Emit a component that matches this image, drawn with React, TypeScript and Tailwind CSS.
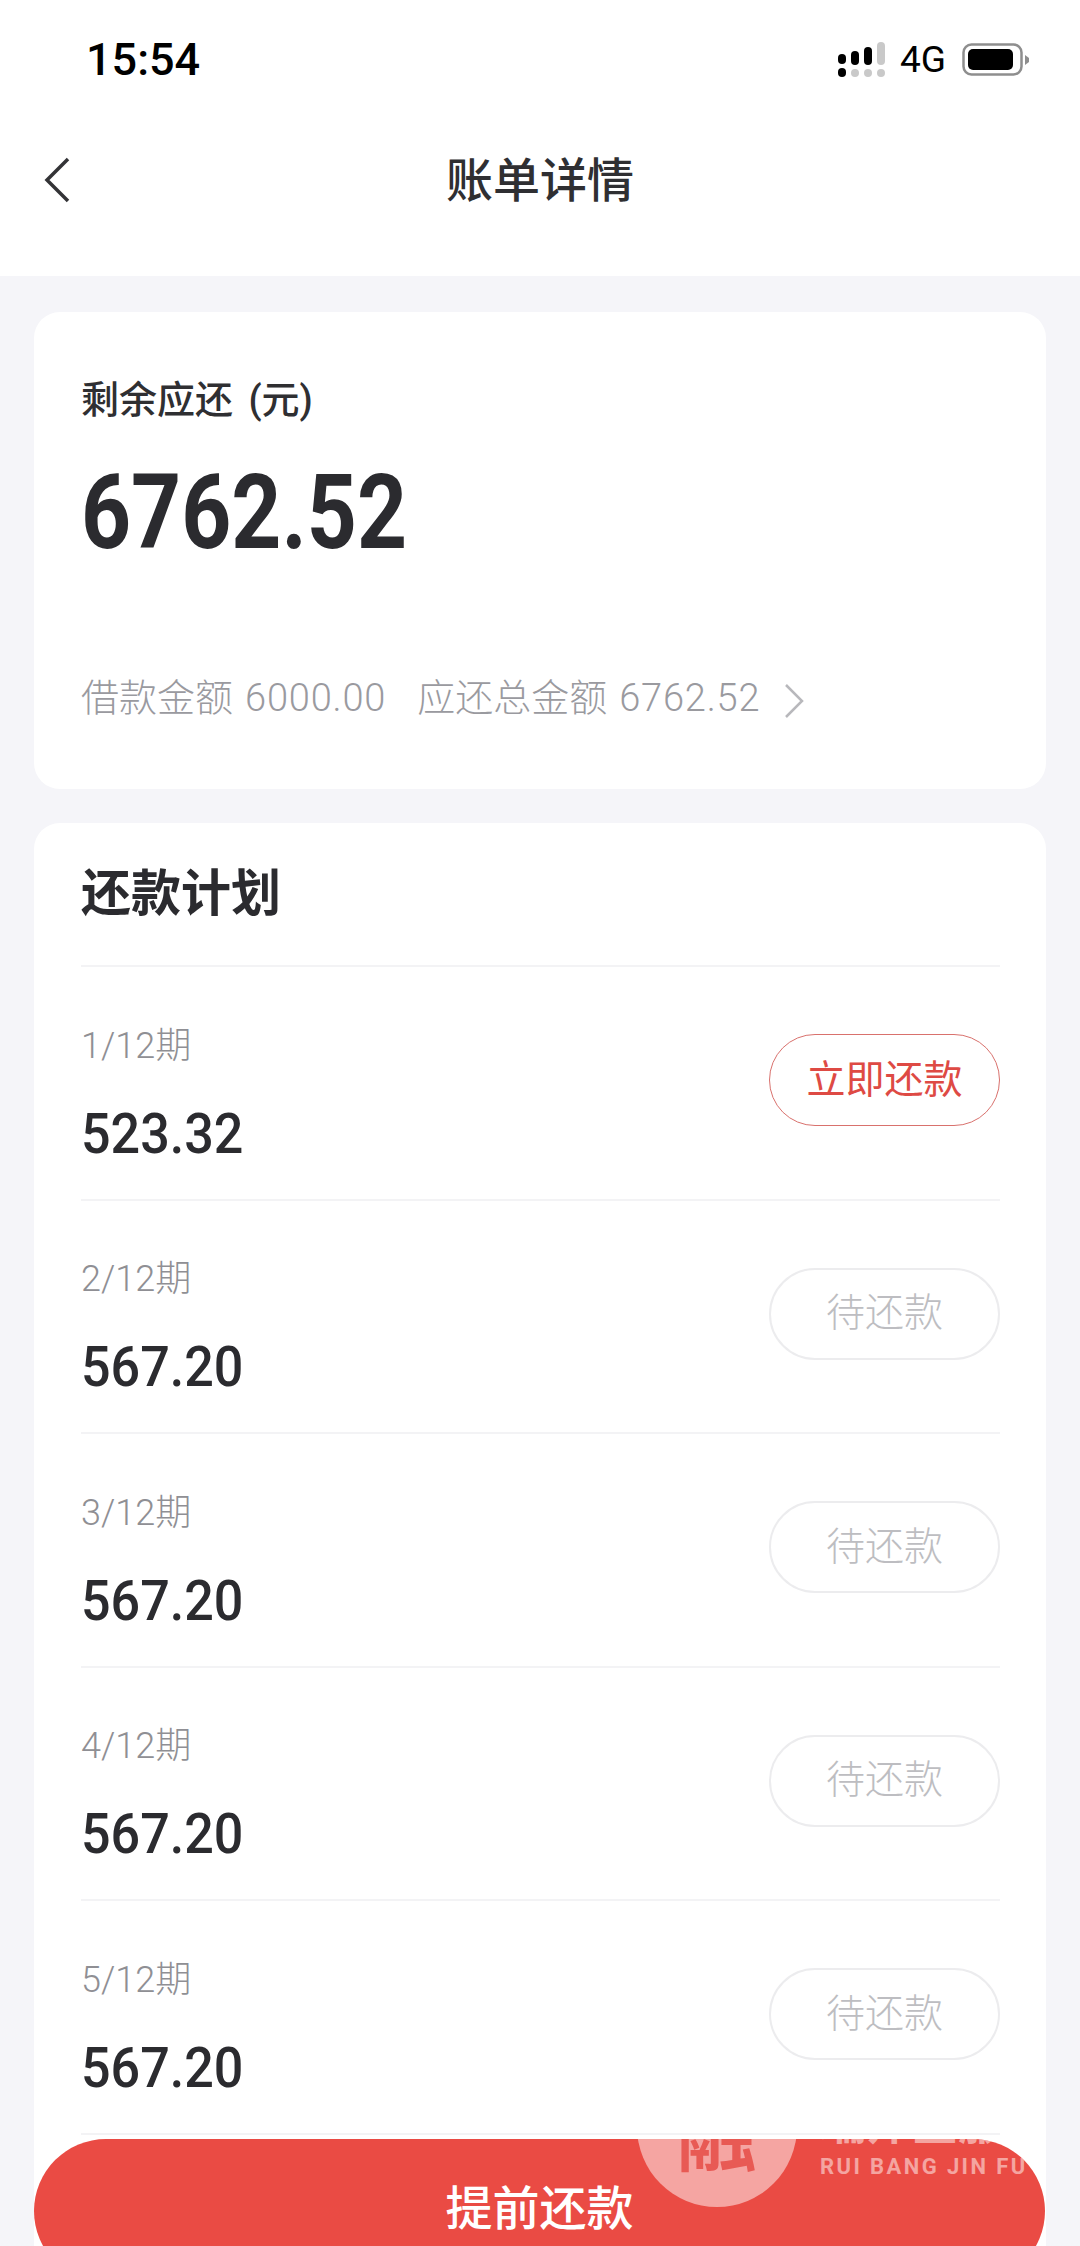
import React from 'react'

const sans = "font-['Roboto','Noto_Sans_CJK_SC',sans-serif]"

const plans = [
  { label: '1/12期', amount: '523.32', active: true },
  { label: '2/12期', amount: '567.20', active: false },
  { label: '3/12期', amount: '567.20', active: false },
  { label: '4/12期', amount: '567.20', active: false },
  { label: '5/12期', amount: '567.20', active: false },
]

const Signal = () => (
  <svg width="50" height="36" viewBox="0 0 50 36" className="block">
    <rect x="2" y="12" width="8" height="10" rx="4" fill="#000" />
    <rect x="15" y="9" width="8" height="14" rx="4" fill="#000" />
    <rect x="28" y="5" width="8" height="18" rx="4" fill="#000" />
    <rect x="41" y="0" width="8" height="23" rx="4" fill="#c9c9c9" />
    <rect x="2" y="26" width="8" height="9" rx="4" fill="#000" />
    <rect x="15" y="27" width="8" height="8" rx="4" fill="#c9c9c9" />
    <rect x="28" y="27" width="8" height="8" rx="4" fill="#c9c9c9" />
    <rect x="41" y="27" width="8" height="8" rx="4" fill="#c9c9c9" />
  </svg>
)

const Battery = () => (
  <svg width="68" height="34" viewBox="0 0 68 34" className="block">
    <rect x="1.5" y="1.5" width="58" height="30" rx="8" fill="none" stroke="#8e8e8e" strokeWidth="2.5" />
    <rect x="6" y="6" width="45" height="21" rx="5" fill="#000" />
    <path d="M63 12 L67 15 V19 L63 22 Z" fill="#8e8e8e" />
  </svg>
)

const App: React.FC = () => {
  return (
    <div className={`relative h-[2246px] w-[1080px] overflow-hidden bg-[#f5f5f9] ${sans}`}>
      <div className="h-[276px] bg-white">
        <div className="flex h-[120px] items-center justify-between pb-[1px] pl-[86px] pr-[50px]">
          <span className="text-[45px] font-medium leading-none text-black">15:54</span>
          <div className="flex items-center">
            <Signal />
            <span className="ml-[14px] mr-[16px] text-[37px] leading-none text-black">4G</span>
            <Battery />
          </div>
        </div>
        <div className="relative flex h-[120px] items-center justify-center">
          <svg width="26" height="46" viewBox="0 0 26 46" fill="none" className="absolute left-[44px] top-[37px]">
            <polyline points="24,2 3,23 24,44" stroke="#333336" strokeWidth="3.5" />
          </svg>
          <span className="text-[47px] font-medium leading-none text-[#2f2f32]">账单详情</span>
        </div>
      </div>

      <div className="mx-[34px] mt-[36px] h-[477px] rounded-[26px] bg-white pl-[47px] pr-[46px] pt-[60px]">
        <div className="text-[38px] font-medium leading-[56px] text-[#2f2f32] [word-spacing:6px]">剩余应还 (元)</div>
        <div className="mt-[30px] origin-left scale-x-[0.84] text-[104px] font-bold leading-[110px] text-[#2b2b2f]">6762.52</div>
        <div className="mt-[105px] flex items-center text-[38px] font-light leading-[50px] text-[#9a9a9f]">
          <span>借款金额</span>
          <span className="ml-[12px] tracking-[0.8px]">6000.00</span>
          <span className="ml-[31px]">应还总金额</span>
          <span className="ml-[12px] tracking-[0.8px]">6762.52</span>
          <svg width="20" height="34" viewBox="0 0 20 34" fill="none" className="ml-[24px] mt-[6px]">
            <polyline points="2,1 18,17 2,33" stroke="#b8b8bc" strokeWidth="2.5" />
          </svg>
        </div>
      </div>

      <div className="mx-[34px] mt-[34px] rounded-[26px] bg-white pb-[200px] pl-[47px] pr-[46px]">
        <div className="flex h-[144px] items-center border-b-2 border-[#f3f3f5] text-[50px] font-bold leading-none text-[#2b2b2f]">还款计划</div>
        {plans.map((plan) => (
          <div key={plan.label} className="flex h-[233.5px] items-center justify-between border-b-2 border-[#f3f3f5]">
            <div className="pt-[22px]">
              <div className="text-[36px] font-light leading-[44px] text-[#8f8f94]">{plan.label}</div>
              <div className="mt-[36px] origin-left scale-x-[0.93] text-[56px] font-medium leading-[60px] text-[#2b2b2f]">{plan.amount}</div>
            </div>
            {plan.active ? (
              <div className="mb-[5px] flex h-[92px] w-[231px] items-center justify-center rounded-full border border-[#d9716d] text-[39px] leading-none text-[#de4a44]">立即还款</div>
            ) : (
              <div className="mb-[5px] flex h-[92px] w-[231px] items-center justify-center rounded-full border-2 border-[#ececee] text-[39px] font-light leading-none text-[#bdbdc1]">待还款</div>
            )}
          </div>
        ))}
      </div>

      <div className="absolute left-[34px] top-[2139px] flex h-[144px] w-[1011px] items-center justify-center overflow-hidden rounded-[72px] bg-[#ea4b44] pb-[6px] text-[47px] font-medium leading-none text-white">
        <span className="relative z-10">提前还款</span>
        {/* watermark sitting over the button */}
        <div className="absolute left-[603px] top-[-92px] flex h-[160px] w-[160px] items-end justify-center rounded-full bg-white/50 pb-[30px] text-[80px] font-bold leading-none text-[#e85a54]">融</div>
        <div className="absolute left-[786px] top-[-42px] w-[214px] overflow-hidden whitespace-nowrap text-white/50">
          <div className="text-[46px] font-bold leading-[52px]">瑞邦金服</div>
          <div className="mt-[6px] text-[22px] font-bold leading-[24px] tracking-[2.4px]">RUI BANG JIN FU</div>
        </div>
      </div>
    </div>
  )
}

export default App
